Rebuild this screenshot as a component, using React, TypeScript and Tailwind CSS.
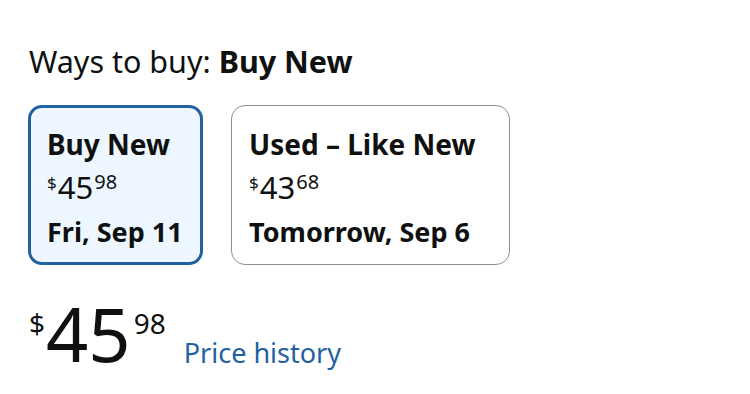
export default function App() {
  return (
    <div className="w-[750px] h-[394px] bg-white text-[#0f1111] font-['Noto_Sans',sans-serif] pl-[28px] pt-[41px]">
      <div className="text-[30.5px] leading-[40px] pl-[1px]">
        Ways to buy: <span className="font-bold">Buy New</span>
      </div>
      <div className="flex gap-[28px] mt-[24px]">
        <div className="w-[175px] h-[160px] rounded-[14px] border-[3px] border-[#2162a1] bg-[#eef7ff] px-[16px] pt-[20px] whitespace-nowrap">
          <div className="text-[28px] font-bold leading-[32px]">Buy New</div>
          <div className="flex items-start leading-none mt-[12px]">
            <span className="text-[17px] mt-[2px]">$</span>
            <span className="text-[31px] ml-[1px]">45</span>
            <span className="text-[20px] ml-[1px]">98</span>
          </div>
          <div className="text-[27px] font-bold leading-[32px] mt-[13px]">Fri, Sep 11</div>
        </div>
        <div className="w-[279px] h-[160px] rounded-[14px] border border-[#8d9096] bg-white px-[17px] pt-[22px] whitespace-nowrap">
          <div className="text-[28px] font-bold leading-[32px]">Used – Like New</div>
          <div className="flex items-start leading-none mt-[12px]">
            <span className="text-[17px] mt-[2px]">$</span>
            <span className="text-[31px] ml-[1px]">43</span>
            <span className="text-[20px] ml-[1px]">68</span>
          </div>
          <div className="text-[27px] font-bold leading-[32px] mt-[13px]">Tomorrow, Sep 6</div>
        </div>
      </div>
      <div className="flex items-start leading-none mt-[32px]">
        <span className="text-[28px] mt-[12px] ml-[1px]">$</span>
        <span className="text-[74px] ml-[1px]">45</span>
        <span className="text-[28px] mt-[12px] ml-[3px]">98</span>
        <a className="text-[27px] text-[#2162a1] mt-[42px] ml-[18px]">Price history</a>
      </div>
    </div>
  );
}
